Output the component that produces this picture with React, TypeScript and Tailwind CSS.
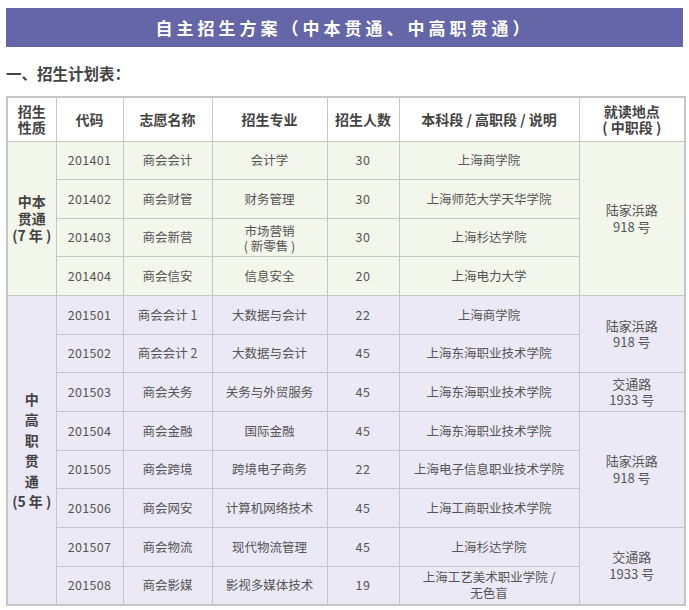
import React from 'react';

type Row = {
  code: string;
  name: string;
  major: React.ReactNode;
  count: string;
  school: React.ReactNode;
};

const groupA: Row[] = [
  { code: '201401', name: '商会会计', major: '会计学', count: '30', school: '上海商学院' },
  { code: '201402', name: '商会财管', major: '财务管理', count: '30', school: '上海师范大学天华学院' },
  {
    code: '201403',
    name: '商会新营',
    major: (
      <span className="block leading-[15px]">
        市场营销
        <br />( 新零售 )
      </span>
    ),
    count: '30',
    school: '上海杉达学院',
  },
  { code: '201404', name: '商会信安', major: '信息安全', count: '20', school: '上海电力大学' },
];

const groupB: Row[] = [
  { code: '201501', name: '商会会计 1', major: '大数据与会计', count: '22', school: '上海商学院' },
  { code: '201502', name: '商会会计 2', major: '大数据与会计', count: '45', school: '上海东海职业技术学院' },
  { code: '201503', name: '商会关务', major: '关务与外贸服务', count: '45', school: '上海东海职业技术学院' },
  { code: '201504', name: '商会金融', major: '国际金融', count: '45', school: '上海东海职业技术学院' },
  { code: '201505', name: '商会跨境', major: '跨境电子商务', count: '22', school: '上海电子信息职业技术学院' },
  { code: '201506', name: '商会网安', major: '计算机网络技术', count: '45', school: '上海工商职业技术学院' },
  { code: '201507', name: '商会物流', major: '现代物流管理', count: '45', school: '上海杉达学院' },
  {
    code: '201508',
    name: '商会影媒',
    major: '影视多媒体技术',
    count: '19',
    school: (
      <span className="block leading-[16.5px]">
        上海工艺美术职业学院 /
        <br />
        无色盲
      </span>
    ),
  },
];

// place cells keyed by row index within group: [rowSpan, content]
const placesB: Record<number, [number, React.ReactNode]> = {
  0: [2, <>陆家浜路<br />918 号</>],
  2: [1, <>交通路<br />1933 号</>],
  3: [3, <>陆家浜路<br />918 号</>],
  6: [2, <>交通路<br />1933 号</>],
};

const td = 'border border-[#c6c6c6] text-center align-middle px-1';
const th = 'border border-[#c6c6c6] text-center align-middle font-bold text-[14px] leading-[16px] text-[#444]';

const App: React.FC = () => {
  return (
    <div
      className="w-[689px] h-[610px] bg-white overflow-hidden"
      style={{ fontFamily: '"Noto Sans CJK SC", "Noto Sans", sans-serif' }}
    >
      <div className="pt-[8px] px-[6px]">
        <div className="h-[39px] bg-[#6566a7] flex items-center justify-center text-white text-[17px] font-bold tracking-[4px]">
          自主招生方案（中本贯通、中高职贯通）
        </div>
        <div className="mt-[17px] h-[20px] flex items-center text-[15.5px] font-bold text-[#444]">
          一、招生计划表：
        </div>
        <table className="mt-[12px] w-[678px] table-fixed border-collapse border-2 border-[#c6c6c6] text-[12.5px] text-[#555]">
          <colgroup>
            <col className="w-[49px]" />
            <col className="w-[67px]" />
            <col className="w-[89px]" />
            <col className="w-[115px]" />
            <col className="w-[72px]" />
            <col className="w-[180px]" />
            <col className="w-[106px]" />
          </colgroup>
          <thead>
            <tr className="h-[44px] bg-white">
              <th className={th}>
                招生
                <br />
                性质
              </th>
              <th className={th}>代码</th>
              <th className={th}>志愿名称</th>
              <th className={th}>招生专业</th>
              <th className={th}>招生人数</th>
              <th className={th}>本科段 / 高职段 / 说明</th>
              <th className={th}>
                就读地点
                <br />( 中职段 )
              </th>
            </tr>
          </thead>
          <tbody>
            {groupA.map((r, i) => (
              <tr key={r.code} className="h-[38.67px] bg-[#f3f6eb]">
                {i === 0 && (
                  <td rowSpan={4} className={`${td} font-bold text-[14px] leading-[17px] text-[#444]`}>
                    中本
                    <br />
                    贯通
                    <br />
                    (7 年 )
                  </td>
                )}
                <td className={`${td} tracking-[0.3px]`}>{r.code}</td>
                <td className={td}>{r.name}</td>
                <td className={td}>{r.major}</td>
                <td className={`${td} tracking-[0.5px]`}>{r.count}</td>
                <td className={td}>{r.school}</td>
                {i === 0 && (
                  <td rowSpan={4} className={`${td} text-[13px] leading-[17px]`}>
                    陆家浜路
                    <br />
                    918 号
                  </td>
                )}
              </tr>
            ))}
            {groupB.map((r, i) => (
              <tr key={r.code} className="h-[38.67px] bg-[#ebe9f5]">
                {i === 0 && (
                  <td rowSpan={8} className={`${td} font-bold text-[14px] leading-[20.5px] text-[#444]`}>
                    中<br />高<br />职<br />贯<br />通<br />(5 年 )
                  </td>
                )}
                <td className={`${td} tracking-[0.3px]`}>{r.code}</td>
                <td className={td}>{r.name}</td>
                <td className={td}>{r.major}</td>
                <td className={`${td} tracking-[0.5px]`}>{r.count}</td>
                <td className={td}>{r.school}</td>
                {placesB[i] && (
                  <td rowSpan={placesB[i][0]} className={`${td} text-[13px] leading-[16.5px]`}>
                    {placesB[i][1]}
                  </td>
                )}
              </tr>
            ))}
          </tbody>
        </table>
      </div>
    </div>
  );
};

export default App;
